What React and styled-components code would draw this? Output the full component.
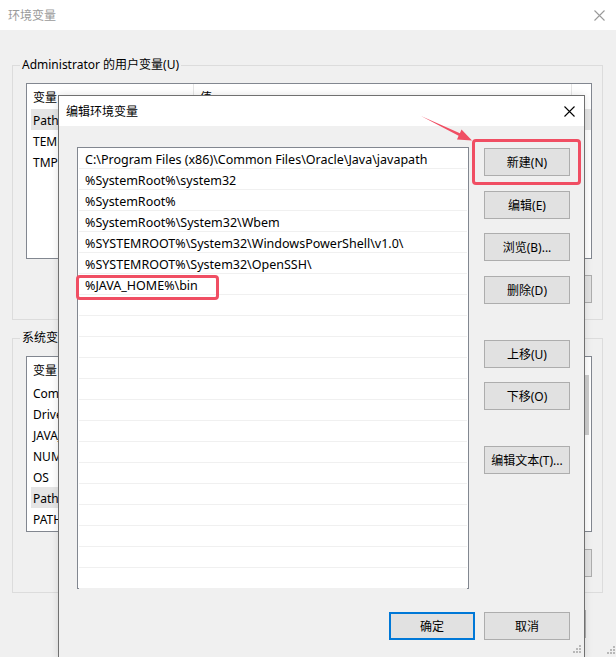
import React from "react";
import styled, { createGlobalStyle } from "styled-components";

const GlobalStyle = createGlobalStyle`
  html, body { margin: 0; padding: 0; }
  body {
    font-family: "Noto Sans", "Noto Sans CJK SC", sans-serif;
    font-size: 12px;
    color: #000;
  }
  * { box-sizing: border-box; }
`;

const Screen = styled.div`
  position: relative;
  width: 616px;
  height: 657px;
  overflow: hidden;
  background: #f0f0f0;
`;

const Window = styled.div`
  display: flex;
  flex-direction: column;
  height: 100%;
`;

const TitleBar = styled.div`
  height: 30px;
  flex-shrink: 0;
  background: #fff;
  display: flex;
  align-items: center;
  justify-content: space-between;
  padding: 0 ${(p) => p.$padRight}px 0 ${(p) => p.$padLeft}px;
  color: ${(p) => (p.$inactive ? "#9a9a9a" : "#000")};
  font-size: 12px;
`;

const CloseIcon = ({ color }) => (
  <svg width="11" height="11" viewBox="0 0 11 11">
    <path d="M0.5 0.5 L10.5 10.5 M10.5 0.5 L0.5 10.5" stroke={color} strokeWidth="1.1" fill="none" />
  </svg>
);

const WindowBody = styled.div`
  display: flex;
  flex-direction: column;
  padding: 0 13px 0 12px;
`;

const Group = styled.div`
  display: flex;
  flex-direction: column;
  border: 1px solid #dcdcdc;
  margin-top: ${(p) => p.$top}px;
  padding: 0 10px ${(p) => p.$bottom}px 13px;
`;

const Legend = styled.div`
  align-self: flex-start;
  margin: -9px 0 0 -6px;
  padding: 0 2px;
  line-height: 16px;
  background: #f0f0f0;
`;

const ListView = styled.div`
  margin-top: 10px;
  height: 176px;
  border: 1px solid #828790;
  background: #fff;
  display: flex;
`;

const ListMain = styled.div`
  flex: 1;
  display: flex;
  flex-direction: column;
`;

const HeaderRow = styled.div`
  display: flex;
  height: 25px;
  flex-shrink: 0;
`;

const HeaderCell = styled.div`
  width: ${(p) => p.$w}px;
  padding-left: 6px;
  display: flex;
  align-items: center;
  border-right: 1px solid #e5e5e5;
`;

const VarRow = styled.div`
  display: flex;
  height: 21px;
  margin-left: 4px;
  padding-top: 2px;
  align-items: center;
  background: ${(p) => (p.$selected ? "#e5e5e5" : "transparent")};
`;

const VarCell = styled.div`
  width: ${(p) => p.$w}px;
  padding-left: 2px;
  white-space: nowrap;
  overflow: hidden;
`;

const ScrollTrack = styled.div`
  width: 7px;
  padding-right: 2px;
  display: flex;
  flex-direction: column;
`;

const ScrollThumb = styled.div`
  margin-top: 18px;
  height: 60px;
  background: #cdcdcd;
`;

const ButtonRow = styled.div`
  display: flex;
  justify-content: flex-end;
  gap: 9px;
  margin-top: ${(p) => p.$top}px;
  margin-right: ${(p) => p.$right || 0}px;
`;

const Button = styled.button`
  width: 86px;
  height: 28px;
  margin: ${(p) => p.$top || 0}px 0 0 0;
  padding: 0;
  border: ${(p) => (p.$default ? "2px solid #0078d7" : "1px solid #adadad")};
  background: #e1e1e1;
  font-family: inherit;
  font-size: 12px;
  color: #000;
  flex-shrink: 0;
`;

const Dialog = styled.div`
  position: absolute;
  left: 58px;
  top: 95px;
  width: 527px;
  height: 564px;
  border: 1px solid #707070;
  background: #f0f0f0;
  display: flex;
  flex-direction: column;
  box-shadow: 0 0 8px rgba(0, 0, 0, 0.12);
`;

const DialogBody = styled.div`
  display: flex;
  flex-direction: column;
  padding: 21px 14px 0 18px;
`;

const MainRow = styled.div`
  display: flex;
  gap: 15px;
`;

const PathList = styled.div`
  width: 392px;
  height: 442px;
  border: 1px solid #828790;
  background: #fff;
  display: flex;
  flex-direction: column;
`;

const PathRow = styled.div`
  height: 21px;
  flex-shrink: 0;
  margin: 0 1px;
  padding: 2px 0 0 6px;
  display: flex;
  align-items: center;
  border-bottom: 1px solid #f0f0f0;
  white-space: nowrap;
  font-size: 12.5px;
`;

const ButtonColumn = styled.div`
  display: flex;
  flex-direction: column;
  width: 86px;
`;

const GripBox = styled.div`
  position: absolute;
  right: ${(p) => p.$right}px;
  bottom: ${(p) => p.$bottom}px;
  line-height: 0;
`;

const Grip = () => (
  <svg width="9" height="9" viewBox="0 0 9 9">
    {[
      [6, 0],
      [3, 3],
      [6, 3],
      [0, 6],
      [3, 6],
      [6, 6],
    ].map(([x, y], i) => (
      <rect key={i} x={x} y={y} width="2" height="2" fill="#b8b8b8" />
    ))}
  </svg>
);

const Highlight = styled.div`
  position: absolute;
  left: ${(p) => p.$x}px;
  top: ${(p) => p.$y}px;
  width: ${(p) => p.$w}px;
  height: ${(p) => p.$h}px;
  border: 3px solid #f04e63;
  border-radius: 4px;
  pointer-events: none;
`;

const ArrowLayer = styled.svg`
  position: absolute;
  left: 0;
  top: 0;
  pointer-events: none;
`;

const userVars = [
  ["Path", true],
  ["TEMP"],
  ["TMP"],
];

const sysVars = [
  ["ComSpec"],
  ["DriverData"],
  ["JAVA_HOME"],
  ["NUMBER_OF_PROCESSORS"],
  ["OS"],
  ["Path", true],
  ["PATHEXT"],
];

const paths = [
  "C:\\Program Files (x86)\\Common Files\\Oracle\\Java\\javapath",
  "%SystemRoot%\\system32",
  "%SystemRoot%",
  "%SystemRoot%\\System32\\Wbem",
  "%SYSTEMROOT%\\System32\\WindowsPowerShell\\v1.0\\",
  "%SYSTEMROOT%\\System32\\OpenSSH\\",
  "%JAVA_HOME%\\bin",
];

const VarList = ({ rows, scroll }) => (
  <ListView>
    <ListMain>
      <HeaderRow>
        <HeaderCell $w={167}>变量</HeaderCell>
        <HeaderCell $w={378}>值</HeaderCell>
      </HeaderRow>
      {rows.map(([k, sel]) => (
        <VarRow key={k} $selected={sel}>
          <VarCell $w={161}>{k}</VarCell>
          <VarCell $w={370} />
        </VarRow>
      ))}
    </ListMain>
    {scroll && (
      <ScrollTrack>
        <ScrollThumb />
      </ScrollTrack>
    )}
  </ListView>
);

export default function App() {
  const rows = [...paths];
  while (rows.length < 21) rows.push("");
  return (
    <>
      <GlobalStyle />
      <Screen>
        <Window>
          <TitleBar $inactive $padLeft={8} $padRight={11}>
            <span>环境变量</span>
            <CloseIcon color="#9a9a9a" />
          </TitleBar>
          <WindowBody>
            <Group $top={35} $bottom={16}>
              <Legend>Administrator 的用户变量(U)</Legend>
              <VarList rows={userVars} />
              <ButtonRow $top={16}>
                <Button aria-label="新建" />
                <Button aria-label="编辑" />
                <Button aria-label="删除" />
              </ButtonRow>
            </Group>
            <Group $top={18} $bottom={15}>
              <Legend>系统变量(S)</Legend>
              <VarList rows={sysVars} scroll />
              <ButtonRow $top={17}>
                <Button aria-label="新建" />
                <Button aria-label="编辑" />
                <Button aria-label="删除" />
              </ButtonRow>
            </Group>
            <ButtonRow $top={17} $right={17}>
              <Button aria-label="确定" />
              <Button aria-label="取消" />
            </ButtonRow>
          </WindowBody>
          <GripBox $right={0} $bottom={2}>
            <Grip />
          </GripBox>
        </Window>

        <Dialog>
          <TitleBar $padLeft={7} $padRight={9}>
            <span>编辑环境变量</span>
            <CloseIcon color="#000" />
          </TitleBar>
          <DialogBody>
            <MainRow>
              <PathList>
                {rows.map((p, i) => (
                  <PathRow key={i}>{p}</PathRow>
                ))}
              </PathList>
              <ButtonColumn>
                <Button $top={1}>新建(N)</Button>
                <Button $top={15}>编辑(E)</Button>
                <Button $top={14}>浏览(B)...</Button>
                <Button $top={15}>删除(D)</Button>
                <Button $top={36}>上移(U)</Button>
                <Button $top={14}>下移(O)</Button>
                <Button $top={36}>编辑文本(T)...</Button>
              </ButtonColumn>
            </MainRow>
            <ButtonRow $top={23}>
              <Button $default>确定</Button>
              <Button>取消</Button>
            </ButtonRow>
          </DialogBody>
          <GripBox $right={2} $bottom={4}>
            <Grip />
          </GripBox>
        </Dialog>

        <Highlight $x={76} $y={275} $w={143} $h={25} />
        <Highlight $x={472} $y={139} $w={109} $h={46} />
        <ArrowLayer width="616" height="657">
          <polygon
            points="421,116 459.9,133.2 461.5,129.6 472,140.5 457,139.4 458.6,135.8"
            fill="#f04e63"
          />
        </ArrowLayer>
      </Screen>
    </>
  );
}
